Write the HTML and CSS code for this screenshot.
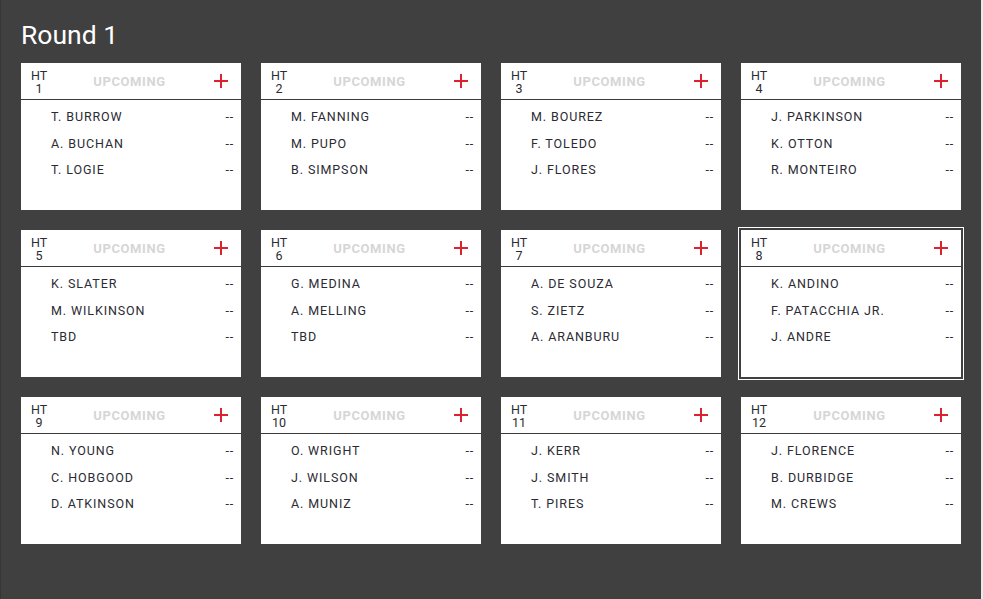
FILE: index.html
```html
<!DOCTYPE html>
<html>
<head>
<meta charset="utf-8">
<link rel="stylesheet" href="styles.css">
</head>
<body>
<main class="board">
  <h1 class="title">Round 1</h1>
  <div class="grid">
    <div class="card">
      <div class="head"><div class="heat">HT<br>1</div><div class="status">UPCOMING</div><div class="plus"><svg width="14" height="14" viewBox="0 0 14 14"><path d="M7 0V14M0 7H14" stroke="#d9232e" stroke-width="2"/></svg></div></div>
      <div class="rows"><div class="row"><span>T. BURROW</span><span>--</span></div><div class="row"><span>A. BUCHAN</span><span>--</span></div><div class="row"><span>T. LOGIE</span><span>--</span></div></div>
    </div>
    <div class="card">
      <div class="head"><div class="heat">HT<br>2</div><div class="status">UPCOMING</div><div class="plus"><svg width="14" height="14" viewBox="0 0 14 14"><path d="M7 0V14M0 7H14" stroke="#d9232e" stroke-width="2"/></svg></div></div>
      <div class="rows"><div class="row"><span>M. FANNING</span><span>--</span></div><div class="row"><span>M. PUPO</span><span>--</span></div><div class="row"><span>B. SIMPSON</span><span>--</span></div></div>
    </div>
    <div class="card">
      <div class="head"><div class="heat">HT<br>3</div><div class="status">UPCOMING</div><div class="plus"><svg width="14" height="14" viewBox="0 0 14 14"><path d="M7 0V14M0 7H14" stroke="#d9232e" stroke-width="2"/></svg></div></div>
      <div class="rows"><div class="row"><span>M. BOUREZ</span><span>--</span></div><div class="row"><span>F. TOLEDO</span><span>--</span></div><div class="row"><span>J. FLORES</span><span>--</span></div></div>
    </div>
    <div class="card">
      <div class="head"><div class="heat">HT<br>4</div><div class="status">UPCOMING</div><div class="plus"><svg width="14" height="14" viewBox="0 0 14 14"><path d="M7 0V14M0 7H14" stroke="#d9232e" stroke-width="2"/></svg></div></div>
      <div class="rows"><div class="row"><span>J. PARKINSON</span><span>--</span></div><div class="row"><span>K. OTTON</span><span>--</span></div><div class="row"><span>R. MONTEIRO</span><span>--</span></div></div>
    </div>
    <div class="card">
      <div class="head"><div class="heat">HT<br>5</div><div class="status">UPCOMING</div><div class="plus"><svg width="14" height="14" viewBox="0 0 14 14"><path d="M7 0V14M0 7H14" stroke="#d9232e" stroke-width="2"/></svg></div></div>
      <div class="rows"><div class="row"><span>K. SLATER</span><span>--</span></div><div class="row"><span>M. WILKINSON</span><span>--</span></div><div class="row"><span>TBD</span><span>--</span></div></div>
    </div>
    <div class="card">
      <div class="head"><div class="heat">HT<br>6</div><div class="status">UPCOMING</div><div class="plus"><svg width="14" height="14" viewBox="0 0 14 14"><path d="M7 0V14M0 7H14" stroke="#d9232e" stroke-width="2"/></svg></div></div>
      <div class="rows"><div class="row"><span>G. MEDINA</span><span>--</span></div><div class="row"><span>A. MELLING</span><span>--</span></div><div class="row"><span>TBD</span><span>--</span></div></div>
    </div>
    <div class="card">
      <div class="head"><div class="heat">HT<br>7</div><div class="status">UPCOMING</div><div class="plus"><svg width="14" height="14" viewBox="0 0 14 14"><path d="M7 0V14M0 7H14" stroke="#d9232e" stroke-width="2"/></svg></div></div>
      <div class="rows"><div class="row"><span>A. DE SOUZA</span><span>--</span></div><div class="row"><span>S. ZIETZ</span><span>--</span></div><div class="row"><span>A. ARANBURU</span><span>--</span></div></div>
    </div>
    <div class="card selected">
      <div class="head"><div class="heat">HT<br>8</div><div class="status">UPCOMING</div><div class="plus"><svg width="14" height="14" viewBox="0 0 14 14"><path d="M7 0V14M0 7H14" stroke="#d9232e" stroke-width="2"/></svg></div></div>
      <div class="rows"><div class="row"><span>K. ANDINO</span><span>--</span></div><div class="row"><span>F. PATACCHIA JR.</span><span>--</span></div><div class="row"><span>J. ANDRE</span><span>--</span></div></div>
    </div>
    <div class="card">
      <div class="head"><div class="heat">HT<br>9</div><div class="status">UPCOMING</div><div class="plus"><svg width="14" height="14" viewBox="0 0 14 14"><path d="M7 0V14M0 7H14" stroke="#d9232e" stroke-width="2"/></svg></div></div>
      <div class="rows"><div class="row"><span>N. YOUNG</span><span>--</span></div><div class="row"><span>C. HOBGOOD</span><span>--</span></div><div class="row"><span>D. ATKINSON</span><span>--</span></div></div>
    </div>
    <div class="card">
      <div class="head"><div class="heat">HT<br>10</div><div class="status">UPCOMING</div><div class="plus"><svg width="14" height="14" viewBox="0 0 14 14"><path d="M7 0V14M0 7H14" stroke="#d9232e" stroke-width="2"/></svg></div></div>
      <div class="rows"><div class="row"><span>O. WRIGHT</span><span>--</span></div><div class="row"><span>J. WILSON</span><span>--</span></div><div class="row"><span>A. MUNIZ</span><span>--</span></div></div>
    </div>
    <div class="card">
      <div class="head"><div class="heat">HT<br>11</div><div class="status">UPCOMING</div><div class="plus"><svg width="14" height="14" viewBox="0 0 14 14"><path d="M7 0V14M0 7H14" stroke="#d9232e" stroke-width="2"/></svg></div></div>
      <div class="rows"><div class="row"><span>J. KERR</span><span>--</span></div><div class="row"><span>J. SMITH</span><span>--</span></div><div class="row"><span>T. PIRES</span><span>--</span></div></div>
    </div>
    <div class="card">
      <div class="head"><div class="heat">HT<br>12</div><div class="status">UPCOMING</div><div class="plus"><svg width="14" height="14" viewBox="0 0 14 14"><path d="M7 0V14M0 7H14" stroke="#d9232e" stroke-width="2"/></svg></div></div>
      <div class="rows"><div class="row"><span>J. FLORENCE</span><span>--</span></div><div class="row"><span>B. DURBIDGE</span><span>--</span></div><div class="row"><span>M. CREWS</span><span>--</span></div></div>
    </div>
  </div>
</main>
</body>
</html>
```

FILE: styles.css
```css
html, body {
  margin: 0;
  padding: 0;
  background: #e9e9e9;
  font-family: Roboto, "Liberation Sans", sans-serif;
}

.board {
  box-sizing: border-box;
  width: 981px;
  height: 599px;
  background: #404040;
  border-left: 1px solid #363636;
  padding: 19px 0 0 20px;
}

.title {
  margin: 0;
  font-size: 26.5px;
  font-weight: 400;
  line-height: 32px;
  color: #ffffff;
}

.grid {
  margin-top: 12px;
  display: grid;
  grid-template-columns: repeat(4, 220px);
  grid-auto-rows: 147px;
  gap: 20px;
}

.card {
  background: #ffffff;
  color: #2b2b33;
}

.card.selected {
  outline: 1px solid #ffffff;
  outline-offset: 2px;
}

.head {
  height: 36px;
  border-bottom: 1px solid #3a3a3a;
  display: grid;
  grid-template-columns: 1fr auto 1fr;
  align-items: center;
  padding: 0 13px 0 10px;
}

.heat {
  justify-self: start;
  font-size: 12.5px;
  line-height: 13px;
  text-align: center;
  margin-top: 1px;
}

.status {
  text-align: center;
  font-size: 13px;
  font-weight: 700;
  letter-spacing: 0.6px;
  color: #d6d6d6;
  line-height: 16px;
  margin-top: 1px;
}

.plus {
  justify-self: end;
  display: flex;
}

.rows {
  padding: 3px 7px 0 30px;
}

.row {
  height: 26.7px;
  display: flex;
  justify-content: space-between;
  align-items: center;
  font-size: 12.5px;
  letter-spacing: 0.9px;
}

.row span:last-child {
  letter-spacing: 0.8px;
}
```
